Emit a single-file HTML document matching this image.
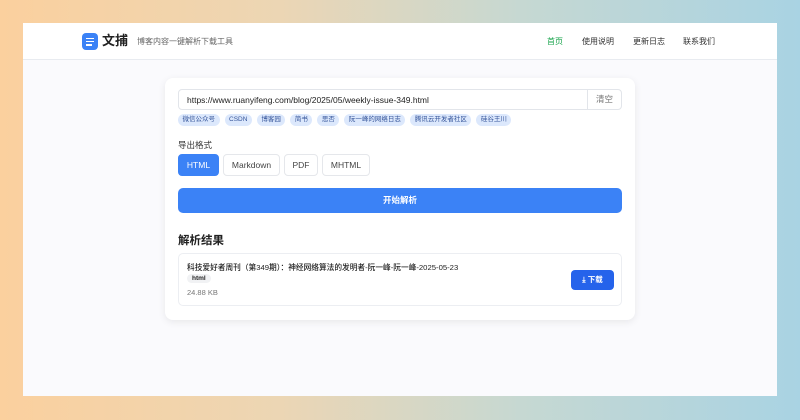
<!DOCTYPE html>
<html><head><meta charset="utf-8"><style>
*{margin:0;padding:0;box-sizing:border-box}
body{width:800px;height:420px;overflow:hidden;background:linear-gradient(90deg,#fbd09e 0%,#ecd6b4 35%,#c6d8d2 65%,#a9d3e3 100%);font-family:"Liberation Sans","Noto Sans CJK SC",sans-serif;position:relative}
.win{position:absolute;left:23px;top:23px;width:754px;height:373px;background:#fafafd}
.hdr{position:absolute;left:0;top:0;width:754px;height:37px;background:#fff;border-bottom:1px solid #e8ebf0}
.logo{position:absolute;left:59px;top:10px;width:16px;height:17px;background:#3b82f6;border-radius:4px}
.logo i{position:absolute;left:4px;height:1.5px;background:#fff;width:8px}
.brand{position:absolute;left:79px;top:8px;font-size:13px;line-height:20px;font-weight:bold;color:#222}
.sub{position:absolute;left:114px;top:13px;font-size:8px;line-height:11px;color:#666}
.nav{position:absolute;top:13px;font-size:8px;line-height:11px;color:#333}
.card{position:absolute;left:142px;top:55px;width:470px;height:242px;background:#fff;border-radius:8px;box-shadow:0 2px 8px rgba(0,0,0,.08)}
.inp{position:absolute;left:13px;top:11px;width:444px;height:21px;border:1px solid #e2e5ea;border-radius:4px;font-size:8.5px;color:#222;padding:5px 8px}
.clr{position:absolute;right:0;top:0;width:34px;height:19px;border-left:1px solid #e2e5ea;font-size:8.5px;color:#777;text-align:center;line-height:19px}
.tags{position:absolute;left:13px;top:36px;display:flex;gap:5px}
.tags span{background:#dce8fc;color:#34549a;font-size:6.5px;border-radius:6px;height:12px;line-height:12px;padding:0 4.5px}
.lbl{position:absolute;left:13px;top:61px;font-size:8.5px;color:#333}
.fmt{position:absolute;top:76px;height:22px;border:1px solid #e5e7eb;border-radius:4px;font-size:8.5px;color:#444;text-align:center;line-height:20px}
.go{position:absolute;left:13px;top:110px;width:444px;height:25px;background:#3b82f6;border-radius:5px;color:#fff;font-size:8.5px;font-weight:bold;text-align:center;line-height:25px}
.rt{position:absolute;left:13px;top:154px;font-size:11.5px;font-weight:bold;color:#222}
.res{position:absolute;left:13px;top:175px;width:444px;height:53px;border:1px solid #eceef2;border-radius:5px}
.ti{position:absolute;left:8px;top:8px;font-size:7.7px;color:#222;font-weight:500}
.bd{position:absolute;left:8px;top:20px;font-size:6.5px;line-height:9px;background:#f1f2f4;border-radius:5px;padding:0 5px;color:#222;font-weight:bold}
.sz{position:absolute;left:8px;top:34px;font-size:7.5px;color:#777}
.dl{position:absolute;left:392px;top:16px;width:43px;height:20px;background:#2563eb;border-radius:4px;color:#fff;font-size:7.5px;text-align:center;line-height:20px;font-weight:bold}
</style></head><body>
<div class="win">
<div class="hdr">
<div class="logo"><i style="top:4.5px"></i><i style="top:7.8px"></i><i style="top:11px;width:6px"></i></div>
<div class="brand">文捕</div>
<div class="sub">博客内容一键解析下载工具</div>
<div class="nav" style="left:524px;color:#16a34a">首页</div>
<div class="nav" style="left:559px">使用说明</div>
<div class="nav" style="left:610px">更新日志</div>
<div class="nav" style="left:660px">联系我们</div>
</div>
<div class="card">
<div class="inp">https://www.ruanyifeng.com/blog/2025/05/weekly-issue-349.html<div class="clr">清空</div></div>
<div class="tags"><span>微信公众号</span><span>CSDN</span><span>博客园</span><span>简书</span><span>思否</span><span>阮一峰的网络日志</span><span>腾讯云开发者社区</span><span>硅谷王川</span></div>
<div class="lbl">导出格式</div>
<div class="fmt" style="left:13px;width:41px;background:#3b82f6;border-color:#3b82f6;color:#fff">HTML</div>
<div class="fmt" style="left:58px;width:57px">Markdown</div>
<div class="fmt" style="left:119px;width:34px">PDF</div>
<div class="fmt" style="left:157px;width:48px">MHTML</div>
<div class="go">开始解析</div>
<div class="rt">解析结果</div>
<div class="res">
<div class="ti">科技爱好者周刊（第349期）：神经网络算法的发明者-阮一峰-阮一峰-2025-05-23</div>
<div class="bd">html</div>
<div class="sz">24.88 KB</div>
<div class="dl">⤓ 下载</div>
</div>
</div>
</div>
</body></html>
